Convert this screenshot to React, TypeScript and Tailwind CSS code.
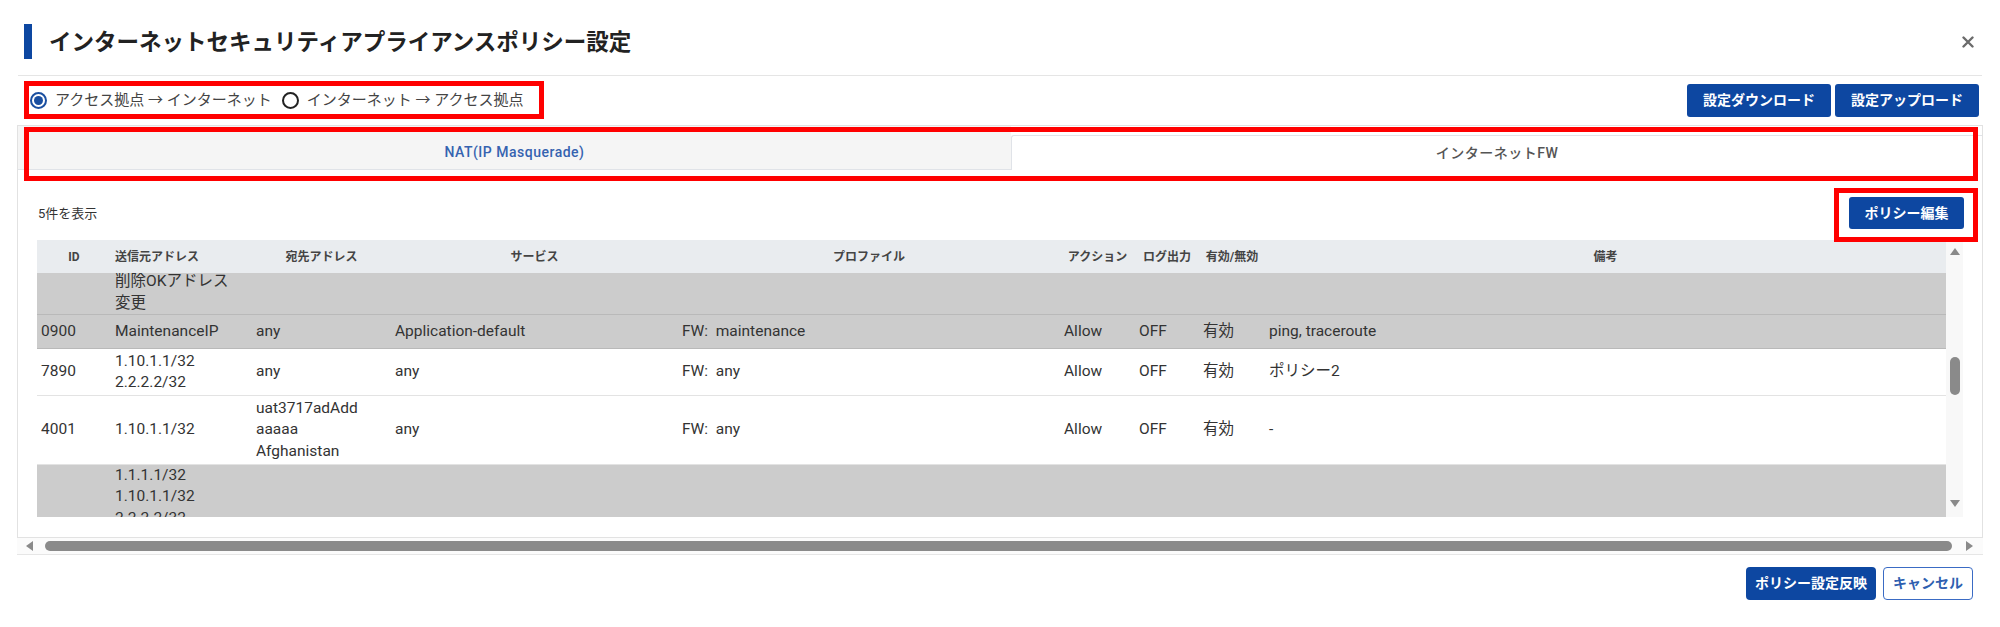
import React from "react";

const cols = "grid grid-cols-[74px_141px_139px_287px_382px_75px_64px_66px_1fr]";

type Row = {
  id: string;
  src: string[];
  dst: string[];
  svc: string;
  prof: string;
  act: string;
  log: string;
  en: string;
  note: string;
  gray: boolean;
};

const rows: Row[] = [
  {
    id: "0900",
    src: ["MaintenanceIP"],
    dst: ["any"],
    svc: "Application-default",
    prof: "FW:\u00a0 maintenance",
    act: "Allow",
    log: "OFF",
    en: "有効",
    note: "ping, traceroute",
    gray: true,
  },
  {
    id: "7890",
    src: ["1.10.1.1/32", "2.2.2.2/32"],
    dst: ["any"],
    svc: "any",
    prof: "FW:\u00a0 any",
    act: "Allow",
    log: "OFF",
    en: "有効",
    note: "ポリシー2",
    gray: false,
  },
  {
    id: "4001",
    src: ["1.10.1.1/32"],
    dst: ["uat3717adAdd", "aaaaa", "Afghanistan"],
    svc: "any",
    prof: "FW:\u00a0 any",
    act: "Allow",
    log: "OFF",
    en: "有効",
    note: "-",
    gray: false,
  },
];

function DataRow({ r }: { r: Row }) {
  return (
    <div
      className={`${cols} items-center border-b min-h-[34px] py-[1.5px] ${
        r.gray ? "bg-[#cccccc] border-[#b9b9b9]" : "bg-white border-[#e3e3e3]"
      }`}
    >
      <div className="px-[4px]">{r.id}</div>
      <div className="px-[4px]">
        {r.src.map((l, i) => (
          <div key={i}>{l}</div>
        ))}
      </div>
      <div className="px-[4px]">
        {r.dst.map((l, i) => (
          <div key={i}>{l}</div>
        ))}
      </div>
      <div className="px-[4px]">{r.svc}</div>
      <div className="px-[4px] whitespace-pre">{r.prof}</div>
      <div className="px-[4px]">{r.act}</div>
      <div className="px-[4px]">{r.log}</div>
      <div className="px-[4px]">{r.en}</div>
      <div className="px-[4px]">{r.note}</div>
    </div>
  );
}

function Radio({ checked, label }: { checked: boolean; label: string }) {
  return (
    <label className="flex items-center gap-[8px]">
      {checked ? (
        <span className="w-[17px] h-[17px] rounded-full border-[2px] border-[#1a4fa0] flex items-center justify-center">
          <span className="w-[9px] h-[9px] rounded-full bg-[#1a4fa0]" />
        </span>
      ) : (
        <span className="w-[17px] h-[17px] rounded-full border-[2px] border-[#222]" />
      )}
      <span className="text-[15px] text-[#444] leading-[20px]">{label}</span>
    </label>
  );
}

export default function App() {
  return (
    <div className="w-[2000px] h-[627px] bg-white text-[#333] font-[Roboto,'Noto_Sans_CJK_JP',sans-serif] overflow-hidden">
      {/* Header */}
      <div className="mx-[18px] h-[76px] pt-[8px] border-b border-[#e5e5e5] flex items-center justify-between">
        <div className="flex items-center">
          <div className="ml-[6px] w-[8px] h-[35px] bg-[#0d47a1]" />
          <h1 className="ml-[17px] text-[22.5px] font-bold text-[#222] leading-[34px]">
            インターネットセキュリティアプライアンスポリシー設定
          </h1>
        </div>
        <svg className="mr-[8px]" width="12" height="12" viewBox="0 0 12 12">
          <path d="M1.5 1.5 L10.5 10.5 M10.5 1.5 L1.5 10.5" stroke="#6b6b6b" strokeWidth="2.4" strokeLinecap="round" />
        </svg>
      </div>

      {/* Radio + buttons row */}
      <div className="mx-[18px] mt-[5px] flex items-center justify-between">
        <div className="ml-[6px] w-[520px] h-[38px] border-[5px] border-[#ff0000] flex items-center gap-[10px] pl-[1px]">
          <Radio checked label="アクセス拠点 → インターネット" />
          <Radio checked={false} label="インターネット → アクセス拠点" />
        </div>
        <div className="flex gap-[4px] mr-[3px]">
          <button className="w-[144px] h-[33px] rounded-[3px] bg-[#0d47a1] text-white text-[14px] font-bold">
            設定ダウンロード
          </button>
          <button className="w-[144px] h-[33px] rounded-[3px] bg-[#0d47a1] text-white text-[14px] font-bold">
            設定アップロード
          </button>
        </div>
      </div>

      {/* Card */}
      <div className="mx-[17px] mt-[6px] border border-[#e2e2e2] relative pb-[20px]">
        {/* Tabs */}
        <div className="flex items-end h-[44px]">
          <div className="w-[993px] h-full bg-[#f5f5f5] border-b border-[#e0e3e8] flex items-center justify-center pt-[10px]">
            <span className="text-[14px] font-medium tracking-[0.5px] text-[#3563b0]">NAT(IP Masquerade)</span>
          </div>
          <div className="flex-1 h-[35px] border-t border-l border-[#e0e3e8] rounded-tl-[3px] flex items-center justify-center">
            <span className="text-[14px] font-medium tracking-[0.5px] text-[#555]">インターネットFW</span>
          </div>
        </div>
        <div className="absolute left-[6px] top-[1px] w-[1954px] h-[54px] border-[5px] border-[#ff0000] pointer-events-none" />

        {/* Controls */}
        <div className="flex justify-between items-start h-[70px] pl-[20px] pr-[4px]">
          <div className="mt-[34px] text-[13px] leading-[20px] text-[#333]">5件を表示</div>
          <div className="relative z-10 mt-[18px] w-[144px] h-[54px] border-[5px] border-[#ff0000] pl-[10px] pt-[4px]">
            <button className="w-[115px] h-[32px] rounded-[3px] bg-[#0d47a1] text-white text-[14px] font-bold">
              ポリシー編集
            </button>
          </div>
        </div>

        {/* Table */}
        <div className="flex mx-[19px] h-[277px]">
          <div className="flex-1 flex flex-col">
            <div className={`${cols} h-[33px] items-center bg-[#e9ecef] text-[12px] font-bold text-[#444]`}>
              <div className="text-center">ID</div>
              <div className="pl-[4px]">送信元アドレス</div>
              <div className="text-center">宛先アドレス</div>
              <div className="text-center">サービス</div>
              <div className="text-center">プロファイル</div>
              <div className="text-center">アクション</div>
              <div className="text-center">ログ出力</div>
              <div className="text-center">有効/無効</div>
              <div className="text-center">備考</div>
            </div>
            <div className="flex-1 overflow-hidden text-[15.5px] leading-[21.5px] text-[#333]">
              <div className={`${cols} h-[42px] overflow-hidden bg-[#cccccc] border-b border-[#b9b9b9]`}>
                <div />
                <div className="px-[4px] -mt-[2px]">
                  <div>削除OKアドレス</div>
                  <div>変更</div>
                </div>
              </div>
              {rows.map((r) => (
                <DataRow key={r.id} r={r} />
              ))}
              <div className={`${cols} bg-[#cccccc] h-[80px]`}>
                <div />
                <div className="px-[4px]">
                  <div>1.1.1.1/32</div>
                  <div>1.10.1.1/32</div>
                  <div>2.2.2.2/32</div>
                </div>
              </div>
            </div>
          </div>
          {/* vertical scrollbar */}
          <div className="w-[17px] h-full bg-[#f8f8f8] flex flex-col items-center">
            <svg className="mt-[8px]" width="10" height="7" viewBox="0 0 10 7">
              <path d="M5 0 L10 7 L0 7 Z" fill="#8a8a8a" />
            </svg>
            <div className="mt-[102px] w-[10px] h-[38px] rounded-full bg-[#8a8a8a]" />
            <div className="flex-1" />
            <svg className="mb-[10px]" width="10" height="7" viewBox="0 0 10 7">
              <path d="M0 0 L10 0 L5 7 Z" fill="#8a8a8a" />
            </svg>
          </div>
        </div>
      </div>

      {/* Horizontal scrollbar */}
      <div className="mx-[17px] h-[17px] flex items-center border-b border-[#e6e6e6] bg-[#fbfbfb]">
        <svg className="ml-[9px]" width="7" height="10" viewBox="0 0 7 10">
          <path d="M7 0 L7 10 L0 5 Z" fill="#8a8a8a" />
        </svg>
        <div className="ml-[12px] flex-1 h-[10px] rounded-full bg-[#8a8a8a]" />
        <svg className="ml-[14px] mr-[10px]" width="7" height="10" viewBox="0 0 7 10">
          <path d="M0 0 L7 5 L0 10 Z" fill="#8a8a8a" />
        </svg>
      </div>

      {/* Footer buttons */}
      <div className="flex justify-end gap-[7px] mt-[12px] mr-[27px]">
        <button className="w-[130px] h-[33px] rounded-[4px] bg-[#0d47a1] text-white text-[14px] font-bold">
          ポリシー設定反映
        </button>
        <button className="w-[90px] h-[33px] rounded-[4px] bg-white border-[1.5px] border-[#3a6bc4] text-[#2f5fb0] text-[14px] font-bold">
          キャンセル
        </button>
      </div>
    </div>
  );
}
